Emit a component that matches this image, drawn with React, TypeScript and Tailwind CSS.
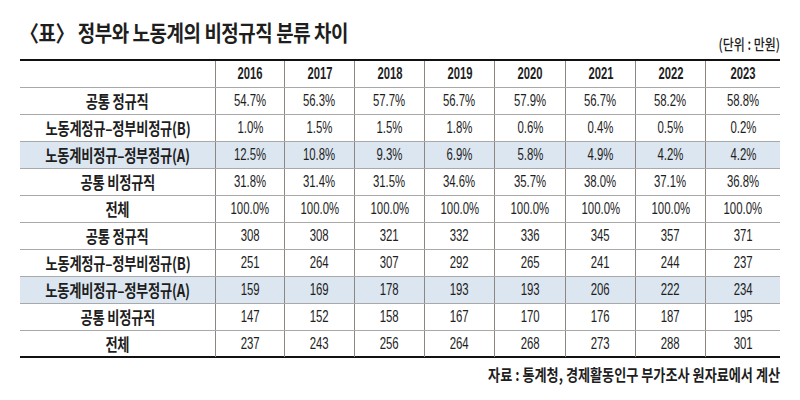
import React from "react";

const years = ["2016", "2017", "2018", "2019", "2020", "2021", "2022", "2023"];

type Row = { label: string; values: string[]; hl?: boolean; last?: boolean };

const rows: Row[] = [
  { label: "공통 정규직", values: ["54.7%", "56.3%", "57.7%", "56.7%", "57.9%", "56.7%", "58.2%", "58.8%"] },
  { label: "노동계정규–정부비정규(B)", values: ["1.0%", "1.5%", "1.5%", "1.8%", "0.6%", "0.4%", "0.5%", "0.2%"] },
  { label: "노동계비정규–정부정규(A)", values: ["12.5%", "10.8%", "9.3%", "6.9%", "5.8%", "4.9%", "4.2%", "4.2%"], hl: true },
  { label: "공통 비정규직", values: ["31.8%", "31.4%", "31.5%", "34.6%", "35.7%", "38.0%", "37.1%", "36.8%"] },
  { label: "전체", values: ["100.0%", "100.0%", "100.0%", "100.0%", "100.0%", "100.0%", "100.0%", "100.0%"] },
  { label: "공통 정규직", values: ["308", "308", "321", "332", "336", "345", "357", "371"] },
  { label: "노동계정규–정부비정규(B)", values: ["251", "264", "307", "292", "265", "241", "244", "237"] },
  { label: "노동계비정규–정부정규(A)", values: ["159", "169", "178", "193", "193", "206", "222", "234"], hl: true },
  { label: "공통 비정규직", values: ["147", "152", "158", "167", "170", "176", "187", "195"] },
  { label: "전체", values: ["237", "243", "256", "264", "268", "273", "288", "301"], last: true },
];

const ko = { fontFamily: '"Noto Sans CJK KR", "Noto Sans", sans-serif' };
const num = { fontFamily: '"Liberation Sans", Arial, sans-serif' };

const gridCols = "grid grid-cols-[195px_69px_70px_70px_70px_71px_70px_70px_75px]";

export default function App() {
  return (
    <div className="w-[800px] h-[400px] bg-white text-[#1e1e1e] px-[20px] pt-[17px]">
      <div className="flex items-end justify-between h-[42px]">
        <div className="self-start">
          <span
            className="inline-block origin-left scale-x-[0.86] text-[22px] leading-[28px] font-bold tracking-[-0.5px] whitespace-nowrap"
            style={ko}
          >
            〈표〉 정부와 노동계의 비정규직 분류 차이
          </span>
        </div>
        <div className="mb-[3px]">
          <span
            className="inline-block origin-right scale-x-[0.8] text-[15px] leading-[18px] font-medium whitespace-nowrap"
            style={ko}
          >
            (단위 : 만원)
          </span>
        </div>
      </div>

      <div className="border-t-2 border-[#111]">
        <div className={`${gridCols} h-[27px] border-b border-[#a9a9a9]`}>
          <div />
          {years.map((y) => (
            <div key={y} className="flex items-center justify-center border-l border-[#8e8780]">
              <span className="inline-block scale-x-[0.66] text-[17px] font-bold" style={num}>
                {y}
              </span>
            </div>
          ))}
        </div>
        {rows.map((r, i) => (
          <div
            key={i}
            className={`${gridCols} h-[27px] ${r.last ? "border-b-2 border-[#111]" : "border-b border-[#a9a9a9]"} ${
              r.hl ? "bg-[#dce6f0]" : ""
            }`}
          >
            <div className="flex items-center justify-center">
              <span
                className="inline-block scale-x-[0.78] text-[17px] font-bold whitespace-nowrap tracking-[-0.3px]"
                style={ko}
              >
                {r.label}
              </span>
            </div>
            {r.values.map((v, j) => (
              <div key={j} className="flex items-center justify-center border-l border-[#8e8780]">
                <span className="inline-block scale-x-[0.67] text-[17px]" style={num}>
                  {v}
                </span>
              </div>
            ))}
          </div>
        ))}
      </div>

      <div className="flex justify-end mt-[6px]">
        <span
          className="inline-block origin-right scale-x-[0.82] text-[16px] leading-[20px] font-bold whitespace-nowrap"
          style={ko}
        >
          자료 : 통계청, 경제활동인구 부가조사 원자료에서 계산
        </span>
      </div>
    </div>
  );
}
